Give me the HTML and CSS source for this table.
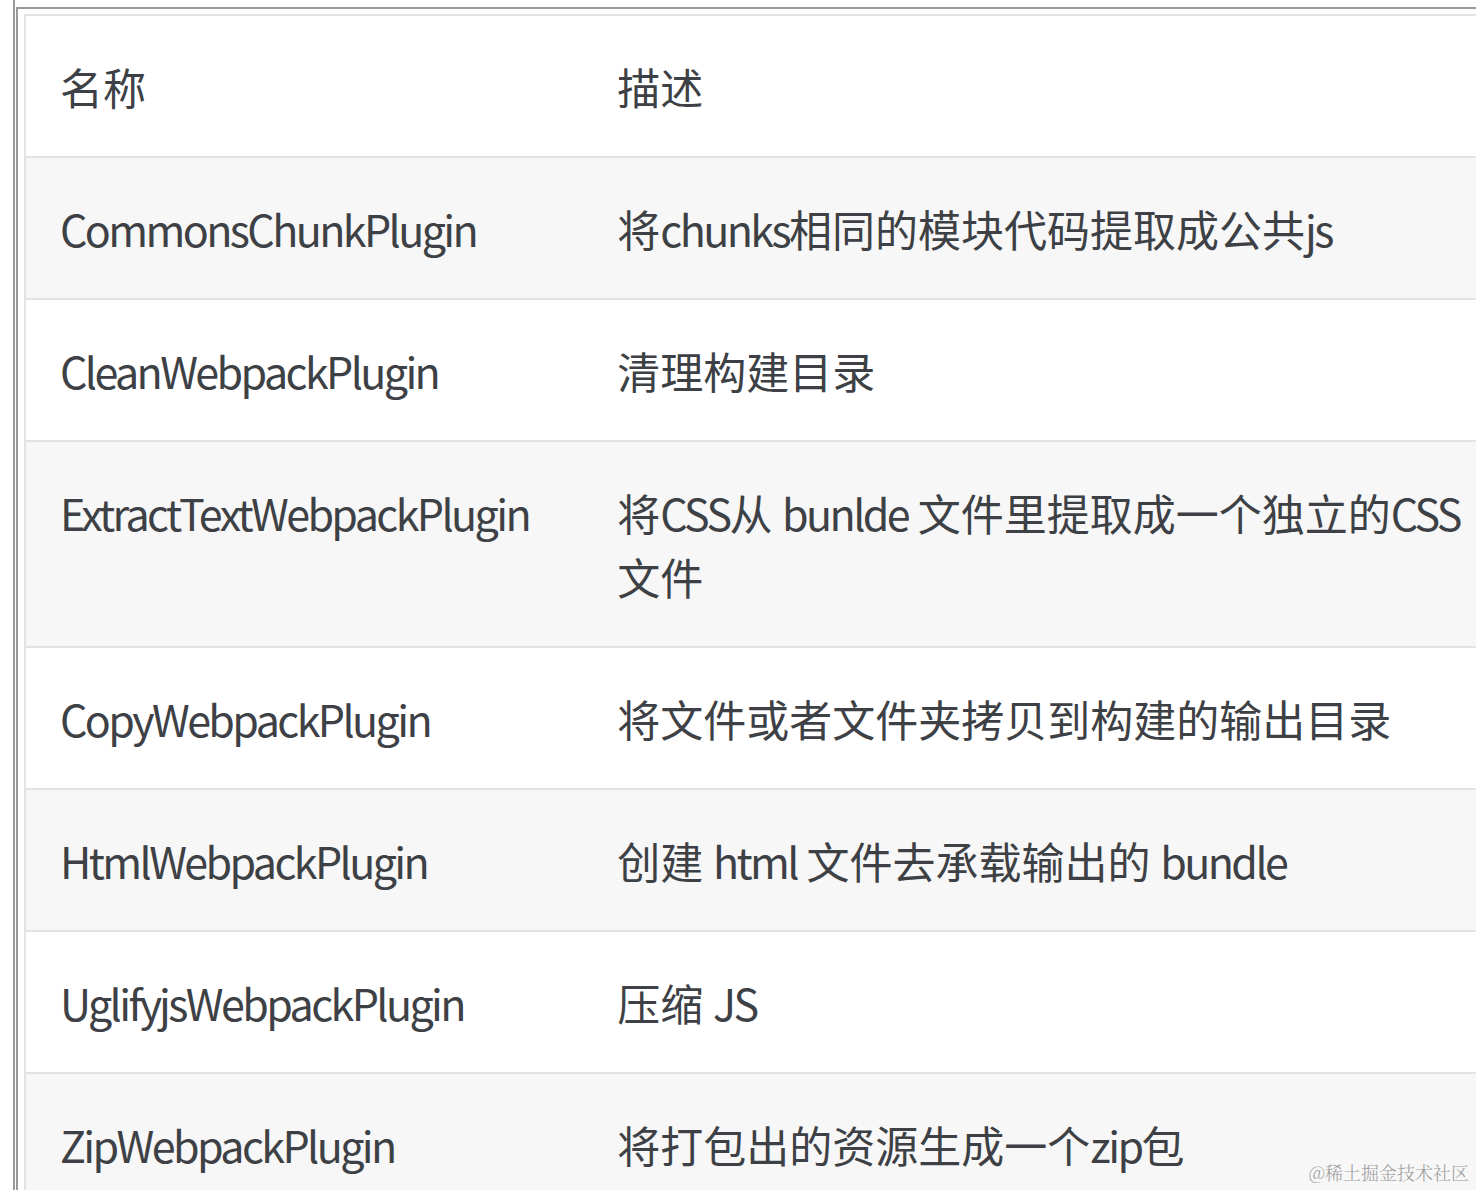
FILE: index.html
```html
<!DOCTYPE html>
<html lang="zh-CN">
<head>
<meta charset="utf-8">
<title>Webpack 插件</title>
<link rel="stylesheet" href="styles.css">
</head>
<body>
<div class="frame-outer">
  <div class="frame-inner">
    <table class="plugins">
      <colgroup>
        <col class="col-name">
        <col class="col-desc">
      </colgroup>
      <thead>
        <tr><th>名称</th><th>描述</th></tr>
      </thead>
      <tbody>
        <tr class="alt"><td class="name">CommonsChunkPlugin</td><td>将<span class="en">chunks</span>相同的模块代码提取成公共<span class="en">js</span></td></tr>
        <tr><td class="name">CleanWebpackPlugin</td><td>清理构建目录</td></tr>
        <tr class="alt"><td class="name">ExtractTextWebpackPlugin</td><td>将<span class="en">CSS</span>从 <span class="en">bunlde</span> 文件里提取成一个独立的<span class="en">CSS</span>文件</td></tr>
        <tr><td class="name">CopyWebpackPlugin</td><td>将文件或者文件夹拷贝到构建的输出目录</td></tr>
        <tr class="alt"><td class="name">HtmlWebpackPlugin</td><td>创建 <span class="en">html</span> 文件去承载输出的 <span class="en">bundle</span></td></tr>
        <tr><td class="name">UglifyjsWebpackPlugin</td><td>压缩 <span class="en">JS</span></td></tr>
        <tr class="alt"><td class="name">ZipWebpackPlugin</td><td>将打包出的资源生成一个<span class="en">zip</span>包</td></tr>
      </tbody>
    </table>
  </div>
</div>
<div class="watermark">@稀土掘金技术社区</div>
</body>
</html>
```
FILE: styles.css
```css
html, body {
  margin: 0;
  padding: 0;
  background: #ffffff;
  overflow: hidden;
  height: 1190px;
}

body {
  font-family: "Noto Sans CJK SC", "Noto Sans", sans-serif;
  color: #3d4145;
  position: relative;
}

.frame-outer {
  margin-left: 13px;
  padding-top: 7px;
  padding-left: 1px;
  border-left: 2px solid #9a9a9a;
  height: 1183px;
}

.frame-inner {
  border-top: 2px solid #9a9a9a;
  border-left: 2px solid #9a9a9a;
  padding: 5px 0 0 6px;
  height: 1176px;
}

.plugins {
  border-collapse: collapse;
  table-layout: fixed;
  width: 1498px;
  border-top: 2px solid #e2e2e2;
  border-left: 2px solid #e2e2e2;
  font-size: 43px;
  line-height: 64px;
}

.col-name { width: 558px; }
.col-desc { width: 938px; }

.plugins th,
.plugins td {
  padding: 38px 34px;
  text-align: left;
  vertical-align: top;
  font-weight: 400;
}

.plugins td {
  border-top: 2px solid #e2e2e2;
}

.plugins td.name,
.plugins .en {
  letter-spacing: -2.6px;
}

.plugins tbody tr { background: #ffffff; }
.plugins tbody tr.alt { background: #f7f7f7; }

.watermark {
  position: absolute;
  right: 7px;
  bottom: 7px;
  font-family: "Noto Serif CJK SC", "Noto Sans CJK SC", serif;
  font-size: 18px;
  line-height: 22px;
  color: #9c9c9c;
  font-weight: 300;
}
```
